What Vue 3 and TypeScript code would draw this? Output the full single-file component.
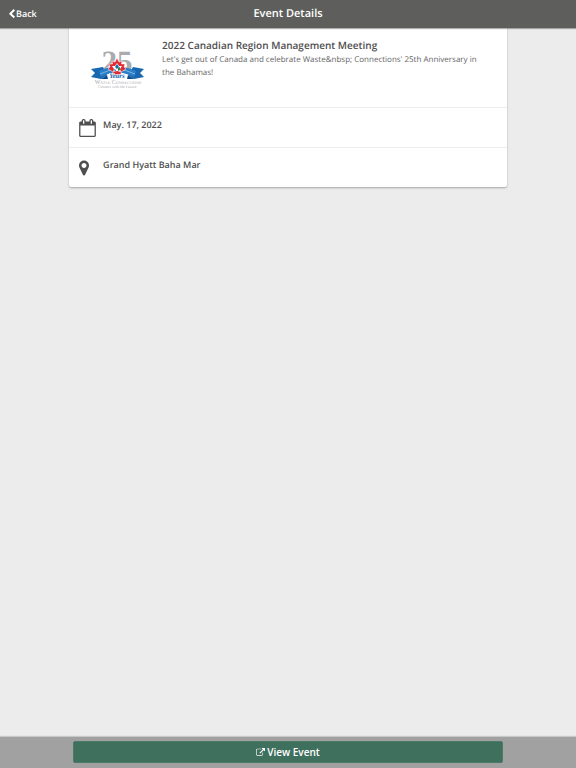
<script setup lang="ts">
interface EventDetails {
  title: string
  description: string
  date: string
  dateTime: string
  venue: string
}

const event: EventDetails = {
  title: '2022 Canadian Region Management Meeting',
  description:
    "Let's get out of Canada and celebrate Waste&nbsp; Connections' 25th Anniversary in the Bahamas!",
  date: 'May. 17, 2022',
  dateTime: '2022-05-17',
  venue: 'Grand Hyatt Baha Mar',
}
</script>

<template>
  <div class="page">
    <header class="topbar">
      <a class="back" href="#">
        <svg class="back-icon" viewBox="410 0 1036 1792" aria-hidden="true">
          <path d="M1427 301l-531 531 531 531q19 19 19 45t-19 45l-166 166q-19 19-45 19t-45-19l-742-742q-19-19-19-45t19-45l742-742q19-19 45-19t45 19l166 166q19 19 19 45t-19 45z" />
        </svg>
        <span>Back</span>
      </a>
      <h1 class="heading">Event Details</h1>
    </header>

    <main class="content">
      <article class="card">
        <section class="summary">
          <svg class="logo" viewBox="0 -8 54 50" role="img" aria-label="Waste Connections 25 Years">
            <text class="logo-number" x="26" y="22" text-anchor="middle">25</text>
            <path fill="#1767b1" d="M0 19 L12 17 L16 25 L10 29 L0 27 L4 23 Z" />
            <path fill="#1767b1" d="M53 19 L42 17 L37 25 L43 29 L53 27 L49 23 Z" />
            <path fill="#0d4b8c" d="M10 29 L16 25 L17 29 Z M43 29 L37 25 L36 29 Z" />
            <path fill="#2b7fc9" d="M8 21 Q26 12 45 21 L43 27 Q26 18 10 27 Z" />
            <path fill="none" stroke="#9cc8ee" stroke-width="0.7" d="M9 24 Q26 15 44 24" />
            <path fill="#e02b35" stroke="#fff" stroke-width="0.5" d="M26 8 L28 12 L31 11 L30.500 14 L34 14 L33 17 L35 19 L30 22 L30 25 L22 25 L22 22 L17 19 L19 17 L18 14 L21.500 14 L21 11 L24 12 Z" />
            <path fill="#fff" d="M26 13 L28 16 L31 16 L29 19 L30 22 L26 21 L22 22 L23 19 L21 16 L24 16 Z" />
            <path fill="#176dad" d="M24 17 L26 14 L28 17 L26 19 Z" />
            <path fill="#2c8059" d="M27 18 L29 17 L29 20 L27 21 Z" />
            <path fill="#176dad" d="M23 19 L25 20 L24 22 Z" />
            <text class="logo-years" x="26" y="28" text-anchor="middle">Years</text>
            <text class="logo-name" x="27" y="34" text-anchor="middle">Waste Connections</text>
            <text class="logo-motto" x="26" y="38" text-anchor="middle">Connect with the Future</text>
          </svg>
          <div class="copy">
            <h2 class="title">{{ event.title }}</h2>
            <p class="description">{{ event.description }}</p>
          </div>
        </section>
        <section class="detail">
          <span class="detail-icon">
            <svg class="calendar" viewBox="64 0 1664 1792" aria-hidden="true">
              <path d="M192 1664h1408v-1024h-1408v1024zm384-1216v-288q0-14-9-23t-23-9h-64q-14 0-23 9t-9 23v288q0 14 9 23t23 9h64q14 0 23-9t9-23zm768 0v-288q0-14-9-23t-23-9h-64q-14 0-23 9t-9 23v288q0 14 9 23t23 9h64q14 0 23-9t9-23zm384-64v1280q0 52-38 90t-90 38h-1408q-52 0-90-38t-38-90v-1280q0-52 38-90t90-38h128v-96q0-66 47-113t113-47h64q66 0 113 47t47 113v96h384v-96q0-66 47-113t113-47h64q66 0 113 47t47 113v96h128q52 0 90 38t38 90z" />
            </svg>
          </span>
          <time :datetime="event.dateTime">{{ event.date }}</time>
        </section>
        <section class="detail">
          <span class="detail-icon">
            <svg class="marker" viewBox="384 0 1024 1792" aria-hidden="true">
              <path d="M1152 640q0-106-75-181t-181-75-181 75-75 181 75 181 181 75 181-75 75-181zm256 0q0 109-33 179l-364 774q-16 33-47.500 52t-67.500 19-67.500-19-46.500-52l-365-774q-33-70-33-179 0-212 150-362t362-150 362 150 150 362z" />
            </svg>
          </span>
          <span>{{ event.venue }}</span>
        </section>
      </article>
    </main>

    <footer class="actions">
      <button class="view-event" type="button">
        <svg class="link-icon" viewBox="0 0 1792 1792" aria-hidden="true">
          <path d="M1408 928v320q0 119-84.500 203.500t-203.500 84.500h-832q-119 0-203.500-84.500t-84.500-203.500v-832q0-119 84.500-203.500t203.500-84.500h704q14 0 23 9t9 23v64q0 14-9 23t-23 9h-704q-66 0-113 47t-47 113v832q0 66 47 113t113 47h832q66 0 113-47t47-113v-320q0-14 9-23t23-9h64q14 0 23 9t9 23zm384-864v512q0 26-19 45t-45 19-45-19l-176-176-652 652q-10 10-23 10t-23-10l-114-114q-10-10-10-23t10-23l652-652-176-176q-19-19-19-45t19-45 45-19h512q26 0 45 19t19 45z" />
        </svg>
        <span>View Event</span>
      </button>
    </footer>
  </div>
</template>

<style>
body {
  margin: 0;
  background: #ececec;
}
</style>

<style scoped>
.page {
  box-sizing: border-box;
  display: flex;
  flex-direction: column;
  min-height: 100vh;
  background: #ececec;
  color: #4f4f4f;
  font-family: "Open Sans", "Noto Sans", sans-serif;
  font-size: 9px;
  text-rendering: geometricPrecision;
}

svg {
  display: block;
  flex: none;
  fill: currentColor;
}

.topbar {
  display: grid;
  grid-template-columns: 1fr auto 1fr;
  align-items: center;
  height: 28px;
  background: #5e5f5c;
  color: #fff;
  box-shadow: 0 1px 1px rgba(0, 0, 0, 0.3);
  z-index: 1;
}

.back {
  display: flex;
  align-items: center;
  gap: 1px;
  padding-left: 9px;
  color: inherit;
  font-weight: 600;
  line-height: 12px;
  text-decoration: none;
}

.back-icon {
  width: 6px;
  height: 10px;
}

.heading {
  margin: 0;
  font-size: 11px;
  font-weight: 600;
  line-height: 16px;
}

.content {
  flex: 1;
  padding: 0 12%;
}

.card {
  background: #fff;
  border-radius: 0 0 2px 2px;
  box-shadow: 0 1px 2px rgba(0, 0, 0, 0.3);
}

.summary {
  display: flex;
  align-items: flex-start;
  gap: 17px;
  box-sizing: border-box;
  min-height: 79px;
  padding: 10px 24px 10px 22px;
}

.logo {
  width: 54px;
  height: 50px;
  margin-top: 4px;
}

.logo-number {
  fill: #a9abae;
  font: bold 31px "Liberation Serif", serif;
}

.logo-years {
  fill: #1767b1;
  stroke: #fff;
  stroke-width: 1px;
  paint-order: stroke;
  font: italic bold 7px "Liberation Serif", serif;
}

.logo-name {
  fill: #a9abae;
  font: small-caps 6px "Liberation Serif", serif;
}

.logo-motto {
  fill: #a9abae;
  font: italic 4px "Liberation Serif", serif;
}

.title {
  margin: 0 0 1px;
  font-size: 10px;
  font-weight: 550;
  line-height: 14px;
}

.description {
  margin: 0;
  color: #666;
  font-size: 8px;
  line-height: 13px;
}

.detail {
  display: flex;
  box-sizing: border-box;
  min-height: 40px;
  padding: 11px 10px 10px;
  border-top: 1px solid #eee;
  font-weight: 550;
  line-height: 11px;
}

.detail-icon {
  width: 24px;
}

.calendar {
  width: 17px;
  height: 18px;
}

.marker {
  width: 10px;
  height: 18px;
}

.actions {
  display: flex;
  box-sizing: border-box;
  padding: 4px 73px 5px;
  background: #a1a1a1;
  box-shadow: 0 -1px 1px rgba(0, 0, 0, 0.15);
}

.view-event {
  display: flex;
  flex: 1;
  align-items: center;
  justify-content: center;
  gap: 2px;
  height: 22px;
  padding: 0;
  border: 1px solid #4b7a69;
  border-radius: 2px;
  background: #3f705e;
  color: #fff;
  font: 550 10px "Open Sans", "Noto Sans", sans-serif;
}

.link-icon {
  width: 9px;
  height: 9px;
}
</style>
